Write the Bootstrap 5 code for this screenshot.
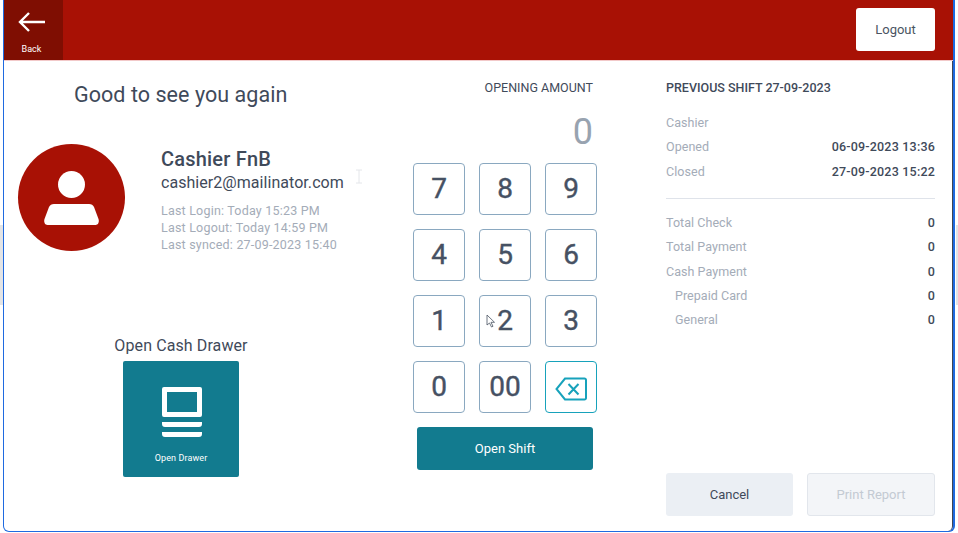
<!DOCTYPE html>
<html lang="en">
<head>
    <meta charset="UTF-8">
    <meta name="viewport" content="width=device-width, initial-scale=1.0">
    <title>Open Shift</title>
    <link href="https://cdn.jsdelivr.net/npm/bootstrap@5.3.0/dist/css/bootstrap.min.css" rel="stylesheet">
    <style>
        html, body {
            height: 100%;
            background: #fff;
            font-family: Roboto, "Liberation Sans", sans-serif;
            color: #3f4a5a;
            overflow: hidden;
        }
        .behind-edge {
            position: absolute;
            top: 225px;
            height: 80px;
            background: #e3e4e6;
        }
        .behind-left { left: 0; width: 3px; }
        .behind-right { left: 956px; width: 2px; }
        .app-frame {
            position: relative;
            width: 952px;
            height: 532px;
            margin-left: 3px;
            border: 1px solid #1f6ae0;
            border-top: 0;
            border-right-width: 2px;
            border-radius: 0 0 6px 6px;
            background: #fff;
            box-shadow: inset -1px 0 0 #3d4656;
        }
        .top-bar {
            height: 61px;
            background: #a81105;
            border-bottom: 1px solid #f2c9c9;
        }
        .back-btn {
            width: 59px;
            height: 60px;
            background: #7f0e02;
            color: #fff;
            font-size: 9px;
            border: 0;
            border-radius: 0;
            padding: 12px 4px 0 0;
        }
        .back-btn svg { margin-bottom: 11px; }
        .logout-btn {
            width: 79px;
            height: 43px;
            margin: 8px 18px 0 0;
            background: #fff;
            color: #4a5462;
            font-size: 13px;
            border: 0;
            border-radius: 3px;
        }
        .left-pane { width: 409px; }
        .greet-title {
            font-size: 21.5px;
            font-weight: 400;
            line-height: 26px;
            margin: 21px 0 36px 70px;
            letter-spacing: .05px;
        }
        .avatar-circle {
            width: 107px;
            height: 107px;
            border-radius: 50%;
            background: #a81105;
            margin-left: 14px;
            flex-shrink: 0;
        }
        .user-info { margin-left: 36px; padding-top: 2px; }
        .user-name { font-size: 20px; font-weight: 500; line-height: 26px; letter-spacing: .2px; }
        .user-mail { font-size: 16px; line-height: 22px; margin-bottom: 8px; letter-spacing: .05px; }
        .user-meta { font-size: 12.5px; line-height: 17px; color: #a4acb8; letter-spacing: .2px; }
        .drawer-box { margin: 83px 0 0 119px; width: 116px; }
        .drawer-title { font-size: 16px; line-height: 20px; white-space: nowrap; display: flex; justify-content: center; margin-bottom: 5px; letter-spacing: .1px; }
        .drawer-btn {
            width: 116px;
            height: 116px;
            background: #127b8f;
            color: #fff;
            font-size: 9px;
            letter-spacing: .1px;
            border: 0;
            border-radius: 2px;
            padding: 26px 0 0;
        }
        .drawer-btn svg { margin: 0 0 15px 2px; }
        .keypad-pane { width: 184px; }
        .amount-label { font-size: 12.5px; text-align: right; line-height: 16px; margin: 19px 4px 0 0; }
        .amount-value { font-size: 36px; line-height: 44px; text-align: right; color: #98a3b0; margin: 14px 4px 9px 0; }
        .key-grid {
            display: grid;
            grid-template-columns: repeat(3, 52px);
            gap: 14px;
        }
        .key-btn {
            height: 52px;
            padding: 0;
            background: #fff;
            color: #465163;
            border: 1px solid #8aa8c0;
            border-radius: 4px;
            font-size: 28px;
            font-weight: 400;
            -webkit-text-stroke: .4px #465163;
            line-height: 1;
        }
        .key-del { border-color: #17a2bb; }
        .open-shift-btn {
            display: block;
            width: 176px;
            height: 43px;
            margin: 14px 0 0 4px;
            background: #127b8f;
            color: #fff;
            font-size: 13px;
            border: 0;
            border-radius: 3px;
        }
        .shift-pane { width: 269px; margin-left: 69px; }
        .shift-title { font-size: 12.5px; font-weight: 500; line-height: 16px; margin: 19px 0 19px; }
        .shift-row {
            display: flex;
            justify-content: space-between;
            font-size: 12.5px;
            line-height: 16px;
            margin-bottom: 8.4px;
            color: #a4acb8;
            letter-spacing: .05px;
        }
        .shift-row b { font-weight: 500; color: #3f4a5a; letter-spacing: .2px; }
        .shift-sub { padding-left: 9px; }
        .shift-line { margin: 18px 0 16px; border: 0; border-top: 1px solid #dfe3ea; opacity: 1; }
        .shift-actions {
            position: absolute;
            left: 662px;
            top: 473px;
            width: 269px;
        }
        .shift-actions .btn { height: 43px; font-size: 13px; padding: 0; }
        .cancel-btn { width: 127px; background: #ebeff4; color: #3f4a5a; border: 0; border-radius: 3px; }
        .print-btn { width: 128px; background: #f3f5f8; color: #c3cad3; border: 1px solid #e2e6ec; border-radius: 3px; }
        .cursor-mark { position: absolute; }
    </style>
</head>
<body>
    <div class="behind-edge behind-left"></div>
    <div class="behind-edge behind-right"></div>
    <div class="app-frame">
        <!-- Barra superior -->
        <div class="top-bar d-flex justify-content-between">
            <button class="btn back-btn d-flex flex-column align-items-center">
                <svg width="28" height="20" viewBox="0 0 28 20" fill="none" stroke="#fff" stroke-width="2.4"><path d="M27 10H2M11 1 2 10l9 9"/></svg>
                Back
            </button>
            <button class="btn logout-btn">Logout</button>
        </div>

        <div class="d-flex">
            <!-- Saludo -->
            <div class="left-pane">
                <h1 class="greet-title">Good to see you again</h1>
                <div class="d-flex">
                    <div class="avatar-circle">
                        <svg width="107" height="107" viewBox="0 0 107 107" fill="#fff">
                            <circle cx="53.5" cy="40.5" r="13.5"/>
                            <path d="M36 60h35c2.500 0 4 1 5 3l4.500 12c1 3-.5 6-3 6H29.500c-2.500 0-4-3-3-6l4.500-12c1-2 2.500-3 5-3z"/>
                        </svg>
                    </div>
                    <div class="user-info">
                        <div class="user-name">Cashier FnB</div>
                        <div class="user-mail">cashier2@mailinator.com</div>
                        <div class="user-meta">Last Login: Today 15:23 PM</div>
                        <div class="user-meta">Last Logout: Today 14:59 PM</div>
                        <div class="user-meta">Last synced: 27-09-2023 15:40</div>
                    </div>
                </div>
                <div class="drawer-box">
                    <div class="drawer-title">Open Cash Drawer</div>
                    <button class="btn drawer-btn d-flex flex-column align-items-center">
                        <svg width="40" height="50" viewBox="0 0 40 50" fill="#fff">
                            <path fill-rule="evenodd" d="M2 0h36a2 2 0 0 1 2 2v26a2 2 0 0 1-2 2H2a2 2 0 0 1-2-2V2a2 2 0 0 1 2-2zm3 5v20h30V5z"/>
                            <path d="M0 35h40v2a3 3 0 0 1-3 3H3a3 3 0 0 1-3-3zM0 45h40v2a3 3 0 0 1-3 3H3a3 3 0 0 1-3-3z"/>
                        </svg>
                        Open Drawer
                    </button>
                </div>
            </div>

            <!-- Teclado -->
            <div class="keypad-pane">
                <div class="amount-label">OPENING AMOUNT</div>
                <div class="amount-value">0</div>
                <div class="key-grid">
                    <button class="btn key-btn">7</button>
                    <button class="btn key-btn">8</button>
                    <button class="btn key-btn">9</button>
                    <button class="btn key-btn">4</button>
                    <button class="btn key-btn">5</button>
                    <button class="btn key-btn">6</button>
                    <button class="btn key-btn">1</button>
                    <button class="btn key-btn">2</button>
                    <button class="btn key-btn">3</button>
                    <button class="btn key-btn">0</button>
                    <button class="btn key-btn">00</button>
                    <button class="btn key-btn key-del">
                        <svg width="32" height="24" viewBox="0 0 32 24" fill="none" stroke="#17a2bb" stroke-width="2"><path d="M10 1.500h19.500a1.500 1.500 0 0 1 1.500 1.500v18a1.500 1.500 0 0 1-1.500 1.500H10L1.500 12zM13.500 7l10 10.500M23.500 7l-10 10.500"/></svg>
                    </button>
                </div>
                <button class="btn open-shift-btn">Open Shift</button>
            </div>

            <!-- Turno anterior -->
            <div class="shift-pane">
                <div class="shift-title">PREVIOUS SHIFT 27-09-2023</div>
                <div class="shift-row"><span>Cashier</span><b></b></div>
                <div class="shift-row"><span>Opened</span><b>06-09-2023 13:36</b></div>
                <div class="shift-row"><span>Closed</span><b>27-09-2023 15:22</b></div>
                <hr class="shift-line">
                <div class="shift-row"><span>Total Check</span><b>0</b></div>
                <div class="shift-row"><span>Total Payment</span><b>0</b></div>
                <div class="shift-row"><span>Cash Payment</span><b>0</b></div>
                <div class="shift-row shift-sub"><span>Prepaid Card</span><b>0</b></div>
                <div class="shift-row shift-sub"><span>General</span><b>0</b></div>
            </div>
        </div>

        <div class="shift-actions d-flex justify-content-between">
            <button class="btn cancel-btn">Cancel</button>
            <button class="btn print-btn">Print Report</button>
        </div>

        <!-- Cursores de la captura -->
        <svg class="cursor-mark" style="left:351px;top:169px" width="8" height="15" viewBox="0 0 8 15" fill="none" stroke="#e4e6ea"><path d="M1 1h6M4 1v13M1 14h6"/></svg>
        <svg class="cursor-mark" style="left:482px;top:314px" width="10" height="14" viewBox="0 0 10 14" fill="#fff" stroke="#4a5462" stroke-width=".8"><path d="M1 1v10l2.500-2 2 4 1.500-.7-2-4H8.500z"/></svg>
    </div>
    <script src="https://cdn.jsdelivr.net/npm/bootstrap@5.3.0/dist/js/bootstrap.bundle.min.js"></script>
</body>
</html>
